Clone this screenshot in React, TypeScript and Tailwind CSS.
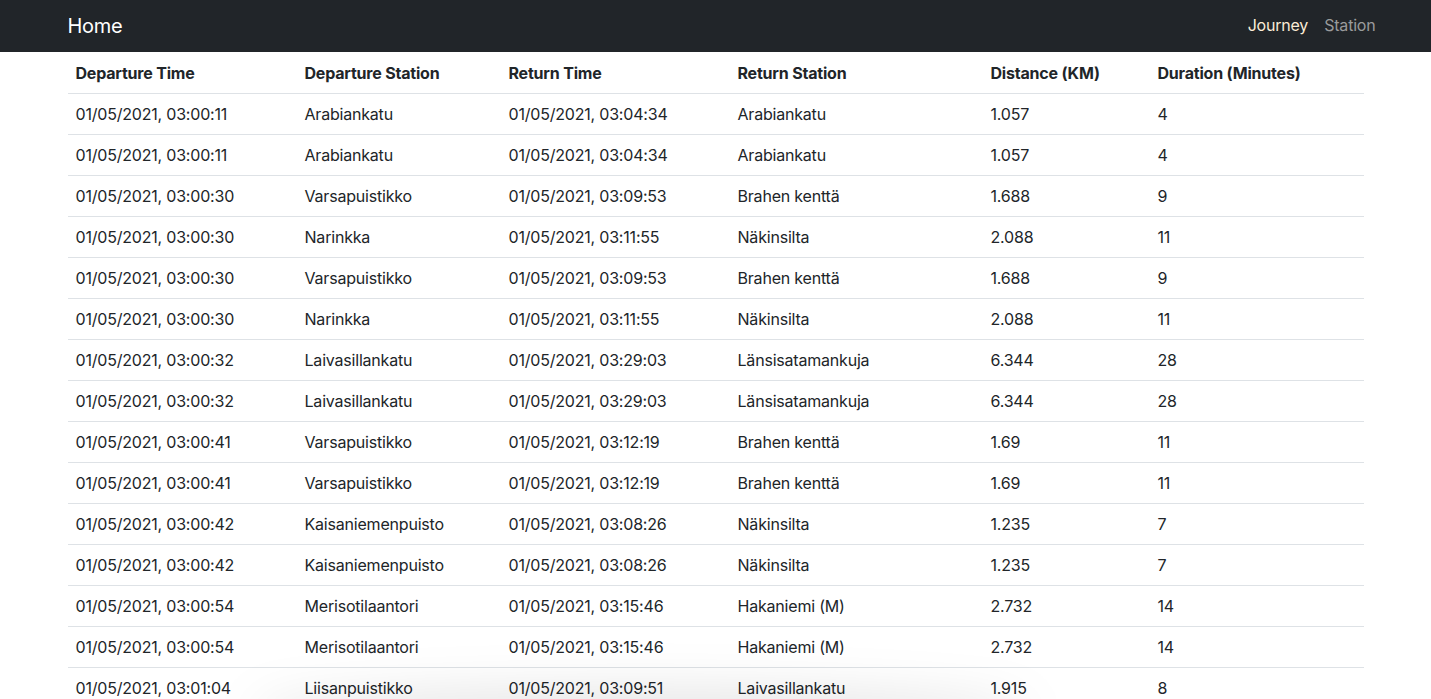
import React from 'react'

type Journey = {
  dep: string
  depStation: string
  ret: string
  retStation: string
  km: string
  min: string
}

const journeys: Journey[] = [
  { dep: '01/05/2021, 03:00:11', depStation: 'Arabiankatu', ret: '01/05/2021, 03:04:34', retStation: 'Arabiankatu', km: '1.057', min: '4' },
  { dep: '01/05/2021, 03:00:11', depStation: 'Arabiankatu', ret: '01/05/2021, 03:04:34', retStation: 'Arabiankatu', km: '1.057', min: '4' },
  { dep: '01/05/2021, 03:00:30', depStation: 'Varsapuistikko', ret: '01/05/2021, 03:09:53', retStation: 'Brahen kenttä', km: '1.688', min: '9' },
  { dep: '01/05/2021, 03:00:30', depStation: 'Narinkka', ret: '01/05/2021, 03:11:55', retStation: 'Näkinsilta', km: '2.088', min: '11' },
  { dep: '01/05/2021, 03:00:30', depStation: 'Varsapuistikko', ret: '01/05/2021, 03:09:53', retStation: 'Brahen kenttä', km: '1.688', min: '9' },
  { dep: '01/05/2021, 03:00:30', depStation: 'Narinkka', ret: '01/05/2021, 03:11:55', retStation: 'Näkinsilta', km: '2.088', min: '11' },
  { dep: '01/05/2021, 03:00:32', depStation: 'Laivasillankatu', ret: '01/05/2021, 03:29:03', retStation: 'Länsisatamankuja', km: '6.344', min: '28' },
  { dep: '01/05/2021, 03:00:32', depStation: 'Laivasillankatu', ret: '01/05/2021, 03:29:03', retStation: 'Länsisatamankuja', km: '6.344', min: '28' },
  { dep: '01/05/2021, 03:00:41', depStation: 'Varsapuistikko', ret: '01/05/2021, 03:12:19', retStation: 'Brahen kenttä', km: '1.69', min: '11' },
  { dep: '01/05/2021, 03:00:41', depStation: 'Varsapuistikko', ret: '01/05/2021, 03:12:19', retStation: 'Brahen kenttä', km: '1.69', min: '11' },
  { dep: '01/05/2021, 03:00:42', depStation: 'Kaisaniemenpuisto', ret: '01/05/2021, 03:08:26', retStation: 'Näkinsilta', km: '1.235', min: '7' },
  { dep: '01/05/2021, 03:00:42', depStation: 'Kaisaniemenpuisto', ret: '01/05/2021, 03:08:26', retStation: 'Näkinsilta', km: '1.235', min: '7' },
  { dep: '01/05/2021, 03:00:54', depStation: 'Merisotilaantori', ret: '01/05/2021, 03:15:46', retStation: 'Hakaniemi (M)', km: '2.732', min: '14' },
  { dep: '01/05/2021, 03:00:54', depStation: 'Merisotilaantori', ret: '01/05/2021, 03:15:46', retStation: 'Hakaniemi (M)', km: '2.732', min: '14' },
  { dep: '01/05/2021, 03:01:04', depStation: 'Liisanpuistikko', ret: '01/05/2021, 03:09:51', retStation: 'Laivasillankatu', km: '1.915', min: '8' },
  { dep: '01/05/2021, 03:01:04', depStation: 'Liisanpuistikko', ret: '01/05/2021, 03:09:51', retStation: 'Laivasillankatu', km: '1.915', min: '8' },
]

const th = 'px-2 py-2 text-left font-bold leading-6 border-b border-[#dee2e6]'
const td = 'px-2 py-2 leading-6 border-b border-[#dee2e6]'

export default function App() {
  return (
    <div className="min-h-screen bg-white text-[#212529] font-['Inter','Liberation_Sans',sans-serif] text-base tracking-[-0.2px]">
      {/* Navbar */}
      <nav className="bg-[#212529] h-[52px]">
        <div className="max-w-[1320px] mx-auto px-3 h-full flex items-center justify-between">
          <a href="#" className="text-white text-xl leading-[30px] tracking-[-0.3px] -mt-px">Home</a>
          <div className="flex items-center gap-4 -mr-3 -mt-0.5">
            <a href="#" className="text-[#fbecd6] leading-6">Journey</a>
            <a href="#" className="text-[#9a9b9c] leading-6">Station</a>
          </div>
        </div>
      </nav>

      <div className="max-w-[1320px] mx-auto px-3 pt-px">
        <table className="w-full border-collapse table-fixed">
          <colgroup>
            <col className="w-[229px]" />
            <col className="w-[204px]" />
            <col className="w-[229px]" />
            <col className="w-[253px]" />
            <col className="w-[167px]" />
            <col className="w-[214px]" />
          </colgroup>
          <thead>
            <tr>
              <th className={th}>Departure Time</th>
              <th className={th}>Departure Station</th>
              <th className={th}>Return Time</th>
              <th className={th}>Return Station</th>
              <th className={th}>Distance (KM)</th>
              <th className={th}>Duration (Minutes)</th>
            </tr>
          </thead>
          <tbody>
            {journeys.map((j, i) => (
              <tr key={i}>
                <td className={td}>{j.dep}</td>
                <td className={td}>{j.depStation}</td>
                <td className={td}>{j.ret}</td>
                <td className={td}>{j.retStation}</td>
                <td className={td}>{j.km}</td>
                <td className={td}>{j.min}</td>
              </tr>
            ))}
          </tbody>
        </table>
      </div>

      {/* soft shadow at the bottom edge of the window */}
      <div className="fixed left-[250px] right-[400px] bottom-[-40px] h-[50px] rounded-[50%] bg-black/10 blur-xl pointer-events-none" />
    </div>
  )
}
